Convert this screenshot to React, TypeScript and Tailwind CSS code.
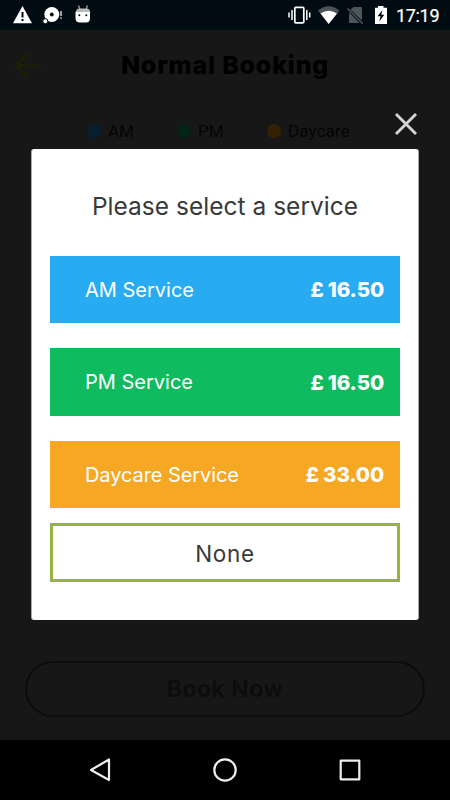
import React from "react";

const services = [
  { name: "AM Service", price: "16.50", row: "h-[67px] bg-[#29abf2]", spacing: "tracking-[0px]" },
  { name: "PM Service", price: "16.50", row: "h-[68px] bg-[#10bb60]", spacing: "tracking-[0px]" },
  { name: "Daycare Service", price: "33.00", row: "h-[67px] bg-[#f6a724]", spacing: "tracking-[-0.08px]" },
];

const legend = [
  { name: "AM", dot: "bg-[#06202f]", place: "ml-[87px] w-[90px]" },
  { name: "PM", dot: "bg-[#022514]", place: "w-[90px]" },
  { name: "Daycare", dot: "bg-[#332105]", place: "tracking-[0.15px]" },
];

function StatusBar() {
  return (
    <div className="h-[30px] bg-[#000c12]">
      <svg width="450" height="30" viewBox="0 0 450 30">
        <path d="M22.500 6L32 23.300H13z" fill="#fff" />
        <path d="M22.500 12v5.500M22.500 19v2" stroke="#000c12" strokeWidth="2" />
        <circle cx="51.800" cy="14.500" r="7.500" fill="#fff" />
        <circle cx="51.800" cy="14.500" r="1.900" fill="#000c12" />
        <circle cx="45.300" cy="21.200" r="2.500" fill="#fff" stroke="#000c12" strokeWidth="1" />
        <path d="M61 11v5M61 17.200v1.600" stroke="#bfc4c6" strokeWidth="1.600" />
        <path d="M78.500 5.500l1.500 4M87.500 5.500l-1.500 4" stroke="#9ca1a3" strokeWidth="1.300" />
        <path d="M75.700 12.500Q76 8.500 79.500 8.500H86.500Q90 8.500 90.300 12.500z" fill="#b6babb" />
        <path d="M75.500 12H90V18Q90 22.500 86 22.500H80Q75.500 22.500 75.500 18z" fill="#fff" />
        <circle cx="79.300" cy="15.200" r="1" fill="#000c12" />
        <circle cx="86.300" cy="15.200" r="1" fill="#000c12" />
        <rect x="294.800" y="7.300" width="9" height="15.500" rx="1" fill="none" stroke="#fff" strokeWidth="1.700" />
        <path d="M292 10v10M306.800 10v10M289 12.500v5M309.700 12.500v5" stroke="#fff" strokeWidth="1.500" />
        <path d="M318 10.500Q328.500 2 339.500 10.500L328.700 24z" fill="#4d5559" />
        <path d="M320.500 13.500Q328.700 8 337 13.500L328.700 24z" fill="#fff" />
        <path d="M353.500 7H361Q362 7 362 8V20.500L350.300 9.500zM349 12L359.500 23H350Q349 23 349 22z" fill="#4d5559" />
        <path d="M347.500 8.500L362.800 23.800" stroke="#4d5559" strokeWidth="1.500" />
        <path d="M375 7.800h3V6h5.500v1.800H387V24H375z" fill="#fff" />
        <path d="M382.500 10l-5 6.200h3l-1.200 5.300 5-6.700h-3z" fill="#000c12" />
        <text x="396" y="22" fill="#fff" fontFamily="Roboto, sans-serif" fontSize="18" fontWeight="400" stroke="#fff" strokeWidth="0.200" textLength="43.500">17:19</text>
      </svg>
    </div>
  );
}

function NavigationBar() {
  return (
    <div className="flex h-[60px] items-center bg-black">
      <svg width="450" height="60" viewBox="0 0 450 60" fill="none" stroke="#eee" strokeWidth="2.200" strokeLinejoin="round">
        <path d="M109 19.500V40L91 30z" />
        <circle cx="225" cy="30" r="10.700" />
        <rect x="340.700" y="20.700" width="18.600" height="18.600" />
      </svg>
    </div>
  );
}

function ServiceDialog() {
  return (
    <div className="absolute left-[31px] top-[78px] w-[388px]">
      <div className="flex h-[41px] justify-end">
        <svg className="mt-1 mr-[1px]" width="24" height="24" viewBox="0 0 24 24" stroke="#d5d5d5" strokeWidth="2.900">
          <path d="M2 2L22 22M22 2L2 22" />
        </svg>
      </div>
      <div className="flex h-[471px] flex-col rounded-[3px] border-x border-[#aaa] bg-white px-[18px] pt-[39px] text-[#393939]">
        <h2 className="h-[68px] text-center text-[24.500px] leading-9 font-normal tracking-[0.02px] whitespace-nowrap">Please select a service</h2>
        <div className="flex flex-col gap-[25px]">
          {services.map((s) => (
            <div key={s.name} className={`flex items-center justify-between pr-4 pl-[35px] text-[20px] text-white ${s.row}`}>
              <span className={s.spacing}>{s.name}</span>
              <span className="flex gap-1 pt-0.5 text-[20.500px] font-extrabold tracking-[-0.1px]"><span>£</span><span>{s.price}</span></span>
            </div>
          ))}
        </div>
        <button className="mt-[15px] h-[59px] border-[3px] border-[#95b43b] pt-0.5 text-[22.500px] tracking-[0.7px]">None</button>
      </div>
    </div>
  );
}

export default function App() {
  return (
    <div className="flex h-[800px] w-[450px] flex-col overflow-hidden font-['Inter',sans-serif]">
      <StatusBar />
      <main className="relative flex h-[710px] flex-col bg-[#171717]">
        <header className="relative flex h-[70px] items-center justify-center">
          <svg className="absolute left-[13px] top-[21px]" width="29" height="29" viewBox="0 0 29 29" fill="none" stroke="#1d1e0a" strokeWidth="3.300">
            <path d="M28 14.500H3M15.500 2L3 14.500L15.500 27" />
          </svg>
          <h1 className="pt-0.5 text-[25px] font-extrabold tracking-[0.8px] text-black">Normal Booking</h1>
        </header>
        <div className="mt-5 flex h-[22px] font-['Roboto',sans-serif] text-[17px] text-[#050505]">
          {legend.map((item) => (
            <div key={item.name} className={`flex items-center gap-[7px] ${item.place}`}>
              <i className={`h-[14px] w-[14px] rounded-full ${item.dot}`} />
              <span className="pt-0.5">{item.name}</span>
            </div>
          ))}
        </div>
        <button className="mx-[25px] mt-auto mb-[23px] h-[56px] rounded-full border-2 border-[#0c0c0c] text-[23px] font-semibold tracking-[0.5px] text-[#0c0c0c]">Book Now</button>
        <ServiceDialog />
      </main>
      <NavigationBar />
    </div>
  );
}
